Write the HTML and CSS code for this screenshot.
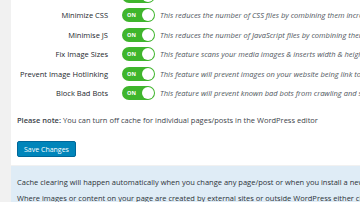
FILE: index.html
```html
<!DOCTYPE html>
<html lang="en">
<head>
    <meta charset="UTF-8">
    <meta name="viewport" content="width=device-width, initial-scale=1.0">
    <title>Cache settings</title>
    <link rel="stylesheet" href="styles.css">
</head>
<body>

    <div class="sidebar"></div>

    <div class="main">
        <div class="panel">
            <div class="settings">
                <!-- previous row, scrolled out of view -->
                <div class="row">
                    <div class="label"></div>
                    <div class="toggle"><i></i></div>
                    <div class="desc"></div>
                </div>
                <div class="row">
                    <div class="label">Minimize CSS</div>
                    <div class="toggle"><span>ON</span><i></i></div>
                    <div class="desc">This reduces the number of CSS files by combining them increasing speed</div>
                </div>
                <div class="row">
                    <div class="label">Minimise JS</div>
                    <div class="toggle"><span>ON</span><i></i></div>
                    <div class="desc">This reduces the number of JavaScript files by combining them into one</div>
                </div>
                <div class="row">
                    <div class="label">Fix Image Sizes</div>
                    <div class="toggle"><span>ON</span><i></i></div>
                    <div class="desc">This feature scans your media images &amp; inserts width &amp; height attributes</div>
                </div>
                <div class="row">
                    <div class="label">Prevent Image Hotlinking</div>
                    <div class="toggle"><span>ON</span><i></i></div>
                    <div class="desc">This feature will prevent images on your website being link to from other sites</div>
                </div>
                <div class="row">
                    <div class="label">Block Bad Bots</div>
                    <div class="toggle"><span>ON</span><i></i></div>
                    <div class="desc">This feature will prevent known bad bots from crawling and scraping your site</div>
                </div>
            </div>

            <p class="note"><strong>Please note:</strong> You can turn off cache for individual pages/posts in the WordPress editor</p>

            <button class="button">Save Changes</button>
        </div>

        <div class="info">
            <p>Cache clearing will happen automatically when you change any page/post or when you install a new plugin or theme</p>
            <p>Where images or content on your page are created by external sites or outside WordPress either clear manually</p>
        </div>
    </div>

</body>
</html>
```

FILE: styles.css
```css
* {
    box-sizing: border-box;
}

body {
    margin: 0;
    display: flex;
    height: 202px;
    overflow: hidden;
    font-family: "Open Sans", Arial, sans-serif;
    font-size: 7.5px;
    color: #3c434a;
    background: #f1f1f1;
}

.sidebar {
    width: 11px;
    flex: none;
}

.main {
    flex: 1;
    min-width: 0;
    overflow: hidden;
}

.panel {
    background: #fff;
    padding: 0 0 8px 6px;
}

/* first row is scrolled partly out of view */
.settings {
    margin-top: -14px;
}

.row {
    display: grid;
    grid-template-columns: 100px 33px 1fr;
    column-gap: 5px;
    align-items: center;
    height: 19.5px;
}

.label {
    text-align: right;
    white-space: nowrap;
    margin-right: 9px;
    color: #23282d;
}

.toggle {
    position: relative;
    width: 33px;
    height: 14px;
    border-radius: 7px;
    background: #3fb52c;
}

.toggle span {
    position: absolute;
    left: 5px;
    top: 0;
    line-height: 14px;
    font-size: 5.5px;
    font-weight: bold;
    color: #fff;
}

.toggle i {
    position: absolute;
    right: 1px;
    top: 1px;
    width: 12px;
    height: 12px;
    border-radius: 50%;
    background: #fff;
}

.desc {
    font-style: italic;
    color: #50575e;
    white-space: nowrap;
}

.note {
    margin: 10px 0 0;
    line-height: 15px;
}

.note strong {
    font-weight: 600;
}

.button {
    margin-top: 13px;
    height: 16px;
    padding: 0 6px;
    border: 1px solid #006799;
    border-radius: 2px;
    background: #0085ba;
    color: #fff;
    font-family: inherit;
    font-size: 7px;
}

.info {
    margin-top: 1px;
    background: #dfecf6;
    padding: 8px 6px 0;
    color: #2c3338;
}

.info p {
    margin: 0;
    line-height: 16px;
    white-space: nowrap;
}
```
